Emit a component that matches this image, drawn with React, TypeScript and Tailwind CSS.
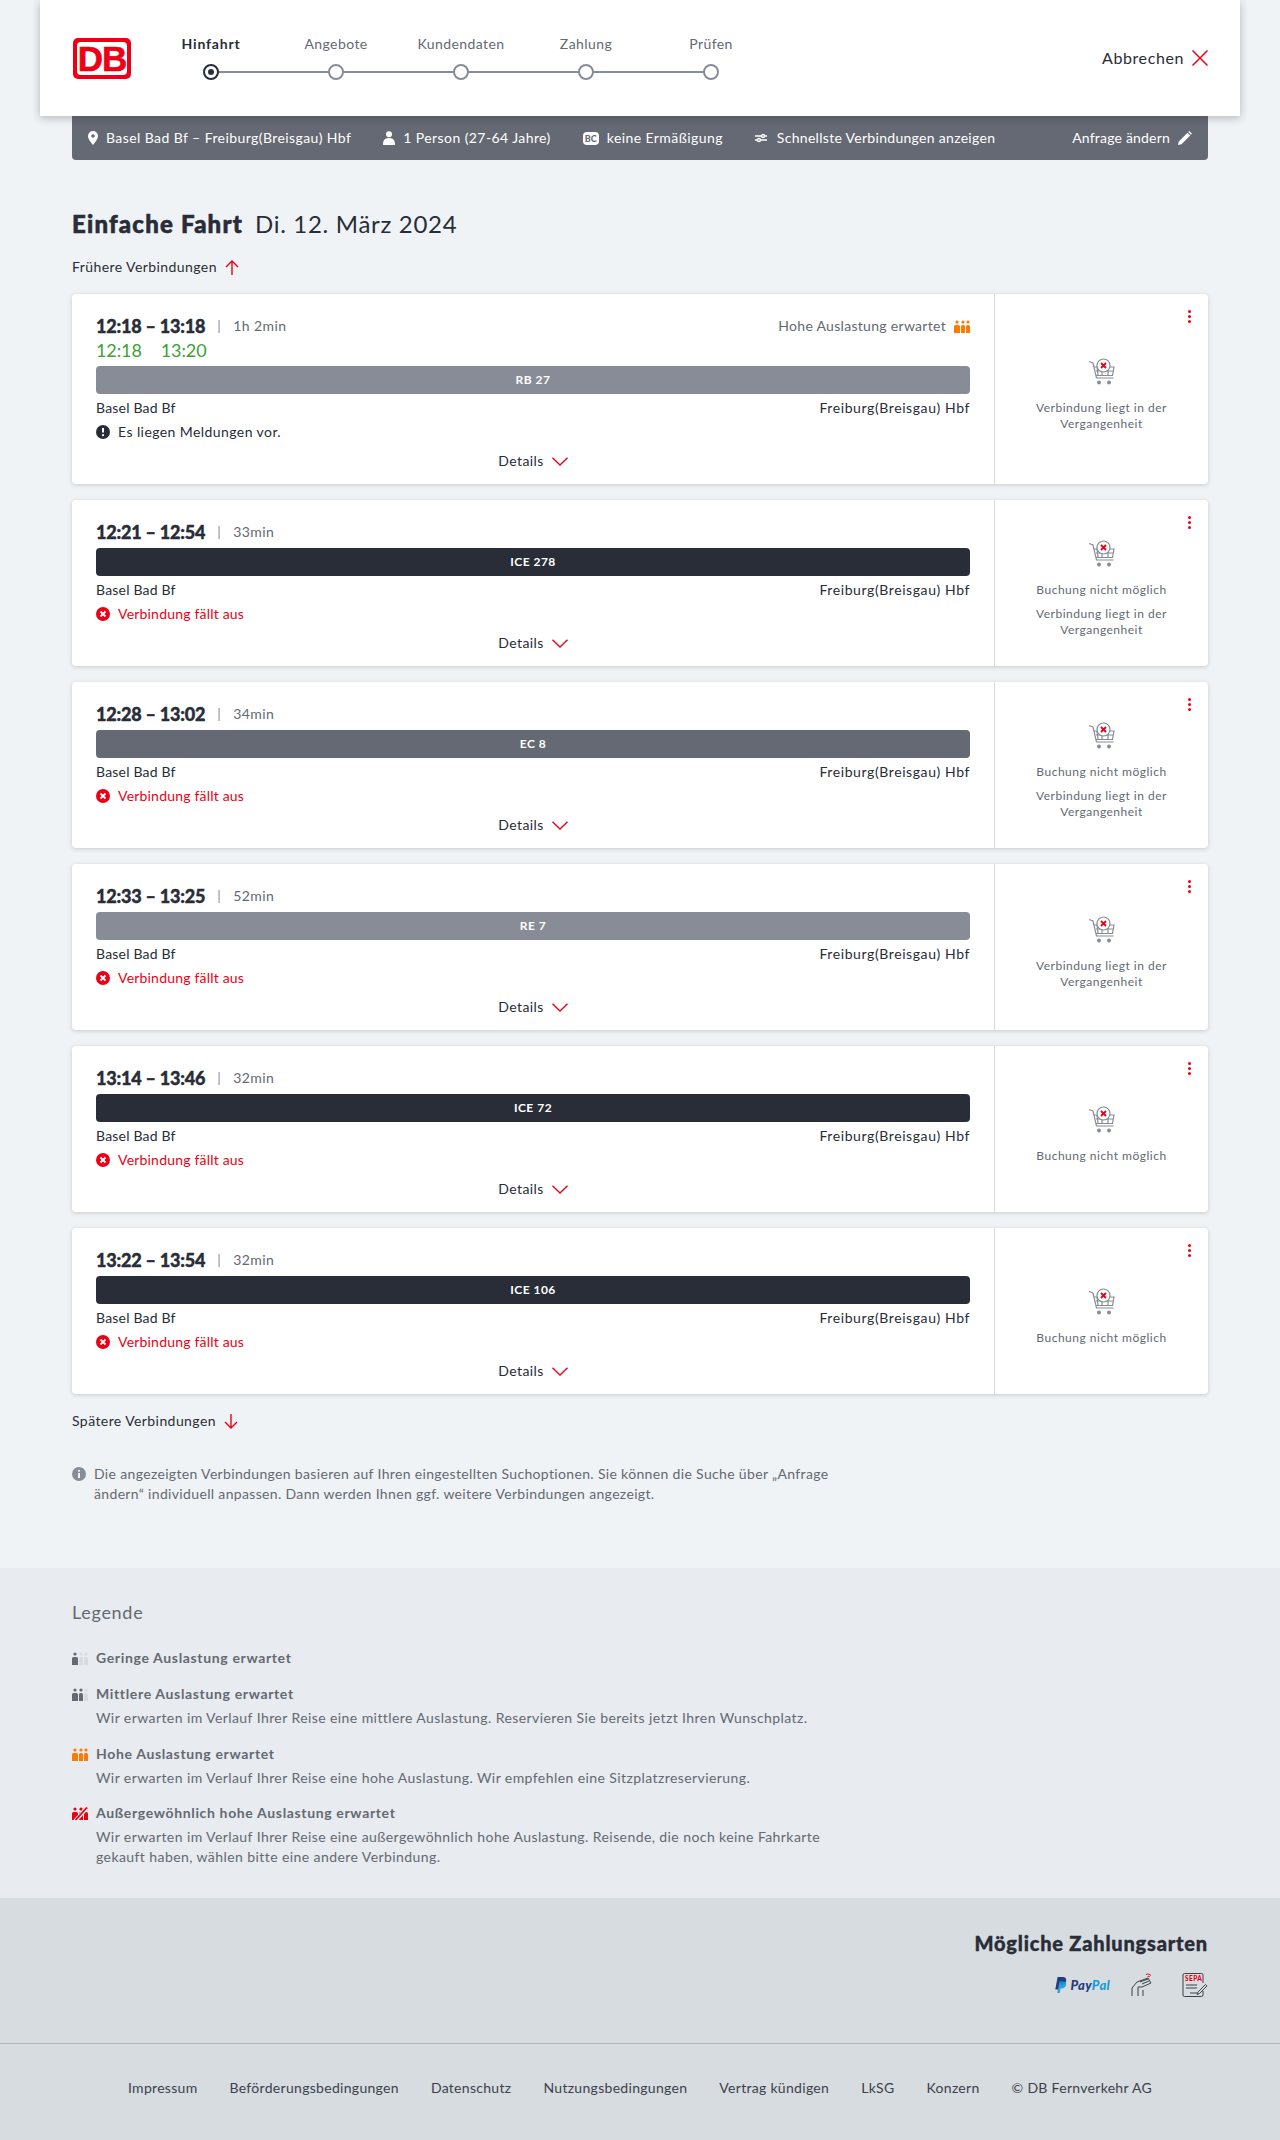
import React from 'react';

const trains = [
  { time: '12:18 – 13:18', dur: '1h 2min', delay: ['12:18', '13:20'], name: 'RB 27', bar: 'bg-[#878c96]', load: true, msg: 'info', right: ['Verbindung liegt in der Vergangenheit'] },
  { time: '12:21 – 12:54', dur: '33min', name: 'ICE 278', bar: 'bg-[#282d37]', msg: 'cancel', right: ['Buchung nicht möglich', 'Verbindung liegt in der Vergangenheit'] },
  { time: '12:28 – 13:02', dur: '34min', name: 'EC 8', bar: 'bg-[#646973]', msg: 'cancel', right: ['Buchung nicht möglich', 'Verbindung liegt in der Vergangenheit'] },
  { time: '12:33 – 13:25', dur: '52min', name: 'RE 7', bar: 'bg-[#878c96]', msg: 'cancel', right: ['Verbindung liegt in der Vergangenheit'] },
  { time: '13:14 – 13:46', dur: '32min', name: 'ICE 72', bar: 'bg-[#282d37]', msg: 'cancel', right: ['Buchung nicht möglich'] },
  { time: '13:22 – 13:54', dur: '32min', name: 'ICE 106', bar: 'bg-[#282d37]', msg: 'cancel', right: ['Buchung nicht möglich'] },
];

const steps = ['Hinfahrt', 'Angebote', 'Kundendaten', 'Zahlung', 'Prüfen'];

const footerLinks = ['Impressum', 'Beförderungsbedingungen', 'Datenschutz', 'Nutzungsbedingungen', 'Vertrag kündigen', 'LkSG', 'Konzern', '© DB Fernverkehr AG'];

const Load = ({ level, color, slash }: { level: number; color: string; slash?: boolean }) => (
  <svg width="16" height="13" viewBox="0 0 16 13" className="shrink-0">
    {[0, 1, 2].map(i => {
      const fill = i < level ? color : '#d7dce1';
      const x = i === 0 ? 0 : i === 1 ? 7 : 12;
      const w = i === 0 ? 6 : 4;
      return (
        <g key={i} fill={fill}>
          <circle cx={x + w / 2} cy="2" r="1.6" />
          <path d={`M${x} 13V6.5a1.5 1.5 0 0 1 1.5-1.5h${w - 3}a1.5 1.5 0 0 1 1.5 1.5V13z`} />
        </g>
      );
    })}
    {slash && (
      <>
        <path d="M3 14L15 1" stroke="#e8ebef" strokeWidth="4" />
        <path d="M3.500 13L15 .5" stroke={color} strokeWidth="1.800" />
      </>
    )}
  </svg>
);

const Cart = () => (
  <svg width="28" height="28" viewBox="0 0 28 28" fill="none" stroke="#878c96" strokeWidth="1.2">
    <path d="M1 3.500l4 1.500 3.500 15h17" />
    <path d="M6 9h20l-1.500 8.500H8" />
    <path d="M9 9l1 8M14 9v8M20 9v8M8 13h17" />
    <circle cx="15.500" cy="7.500" r="6.500" fill="#fff" />
    <path d="M13 5l5 5M18 5l-5 5" stroke="#ec0016" strokeWidth="1.800" />
    <circle cx="11" cy="24.500" r="2" fill="#878c96" stroke="none" />
    <circle cx="21" cy="24.500" r="2" fill="#878c96" stroke="none" />
  </svg>
);

const Chevron = () => (
  <svg width="16" height="9" viewBox="0 0 16 9" fill="none" stroke="#ec0016" strokeWidth="1.4">
    <path d="M.5.8L8 8l7.500-7.200" />
  </svg>
);

const Arrow = ({ up }: { up?: boolean }) => (
  <svg width="14" height="15" viewBox="0 0 14 15" fill="none" stroke="#ec0016" strokeWidth="1.4" className={up ? '' : 'rotate-180'}>
    <path d="M7 15V1M1 7l6-6 6 6" />
  </svg>
);

const Card = ({ t }: { t: (typeof trains)[number] }) => (
  <div className="flex bg-white rounded shadow-[0_1px_4px_rgba(40,45,55,0.2)]">
    <div className="w-[922px] px-6 pt-5 pb-[13px]">
      <div className={`flex items-center h-6 ${t.delay ? '' : 'mb-1'}`}>
        <span className="text-[18px] font-black text-[#282d37] tracking-[-0.2px] [-webkit-text-stroke:0.4px_#282d37]">{t.time}</span>
        <span className="ml-3 text-sm text-[#878c96]">|</span>
        <span className="ml-3 text-sm text-[#646973]">{t.dur}</span>
        {t.load && (
          <span className="ml-auto flex items-center gap-2 text-sm text-[#646973] tracking-[0.3px]">
            Hohe Auslastung erwartet
            <Load level={3} color="#ff7a00" />
          </span>
        )}
      </div>
      {t.delay && (
        <div className="flex gap-[19px] h-6 mb-1 text-[18px] leading-6 text-[#40a035] tracking-[-0.1px]">
          <span>{t.delay[0]}</span>
          <span>{t.delay[1]}</span>
        </div>
      )}
      <div className={`h-7 rounded flex items-center justify-center text-white text-xs font-bold tracking-[0.5px] ${t.bar}`}>{t.name}</div>
      <div className="flex justify-between mt-1 h-5 text-sm leading-5 text-[#282d37]">
        <span className="tracking-[0.2px]">Basel Bad Bf</span>
        <span className="tracking-[0.6px]">Freiburg(Breisgau) Hbf</span>
      </div>
      {t.msg === 'info' ? (
        <div className="flex items-center gap-2 mt-1 h-5 text-sm text-[#282d37]">
          <svg width="14" height="14" viewBox="0 0 14 14">
            <circle cx="7" cy="7" r="7" fill="#282d37" />
            <path d="M7 3v4.500" stroke="#fff" strokeWidth="2" />
            <circle cx="7" cy="10.200" r="1.100" fill="#fff" />
          </svg>
          Es liegen Meldungen vor.
        </div>
      ) : (
        <div className="flex items-center gap-2 mt-1 h-5 text-sm text-[#ec0016] tracking-[0.2px]">
          <svg width="14" height="14" viewBox="0 0 14 14">
            <circle cx="7" cy="7" r="7" fill="#ec0016" />
            <path d="M4.500 4.500l5 5M9.500 4.500l-5 5" stroke="#fff" strokeWidth="1.800" />
          </svg>
          Verbindung fällt aus
        </div>
      )}
      <div className="flex items-center justify-center gap-2 mt-[9px] h-5 text-sm text-[#282d37]">
        Details
        <Chevron />
      </div>
    </div>
    <div className="relative flex-1 border-l border-[#d7dce1] flex flex-col items-center justify-center pt-3 px-6">
      <div className="absolute right-[17px] top-4 flex flex-col gap-[2px]">
        <span className="w-[3px] h-[3px] rounded-full bg-[#ec0016]" />
        <span className="w-[3px] h-[3px] rounded-full bg-[#ec0016]" />
        <span className="w-[3px] h-[3px] rounded-full bg-[#ec0016]" />
      </div>
      <Cart />
      <div className="mt-[14px] flex flex-col gap-2 text-xs leading-4 text-[#646973] text-center tracking-[0.5px]">
        {t.right.map(r => <p key={r}>{r}</p>)}
      </div>
    </div>
  </div>
);

const LegendItem = ({ icon, title, children, last }: { icon: React.ReactNode; title: string; children?: React.ReactNode; last?: boolean }) => (
  <div className={last ? 'mt-[15px]' : 'mt-4 first:mt-0'}>
    <div className="flex items-center gap-2 h-5 text-sm font-bold text-[#646973] tracking-[0.65px]">
      {icon}
      {title}
    </div>
    {children && <p className="mt-1 ml-6 w-[760px] text-sm leading-5 text-[#646973]">{children}</p>}
  </div>
);

export default function App() {
  return (
    <div className="min-h-[2140px] bg-[#f0f3f5] font-['Lato','Noto_Sans',sans-serif] text-[#282d37] tracking-[0.42px]">
      <header className="relative z-10 mx-10 h-[116px] bg-white shadow-[0_2px_8px_rgba(40,45,55,0.3)] flex pl-[33px] pr-8">
        <div className="mt-[38px] w-[58px] h-[41px] rounded-[5px] bg-[#ec0016] p-1">
          <div className="h-full rounded-sm bg-white flex items-center justify-center text-[#ec0016] text-[35px] leading-none font-bold font-['Liberation_Sans',sans-serif] tracking-[-1px] [-webkit-text-stroke:0.6px_#ec0016]">DB</div>
        </div>
        <div className="flex ml-[17.5px] mt-[34px]">
          {steps.map((s, i) => (
            <div key={s} className="relative w-[125px] flex flex-col items-center">
              <span className={`h-5 text-sm leading-5 ${i === 0 ? 'font-bold text-[#282d37] tracking-[0.8px]' : 'text-[#646973]'}`}>{s}</span>
              <span className={`relative z-10 mt-[10px] w-4 h-4 rounded-full border-2 bg-white flex items-center justify-center ${i === 0 ? 'border-[#282d37]' : 'border-[#878c96]'}`}>
                {i === 0 && <span className="w-1.5 h-1.5 rounded-full bg-[#282d37]" />}
              </span>
              {i < 4 && <span className="absolute left-1/2 top-[37px] w-[125px] h-0.5 bg-[#878c96]" />}
            </div>
          ))}
        </div>
        <div className="ml-auto flex items-center gap-2 text-base tracking-[0.6px]">
          Abbrechen
          <svg width="16" height="16" viewBox="0 0 16 16" stroke="#ec0016" strokeWidth="1.5">
            <path d="M.5.5l15 15M15.500.5l-15 15" />
          </svg>
        </div>
      </header>

      <main className="mx-[72px]">
        <div className="h-11 rounded-b bg-[#646973] flex items-center pl-4 pr-4 text-sm text-white">
          <svg width="10" height="14" viewBox="0 0 10 14" fill="#fff"><path fillRule="evenodd" d="M5 0a5 5 0 0 1 5 5c0 3-3 6.500-5 9-2-2.500-5-6-5-9a5 5 0 0 1 5-5zm0 3.200a1.800 1.800 0 1 0 0 3.600 1.800 1.800 0 0 0 0-3.600z" /></svg>
          <span className="ml-2">Basel Bad Bf – Freiburg(Breisgau) Hbf</span>
          <svg className="ml-8" width="12" height="14" viewBox="0 0 12 14" fill="#fff"><circle cx="6" cy="3.200" r="3" /><path d="M0 14c0-4 1-7 6-7s6 3 6 7z" /></svg>
          <span className="ml-2">1 Person (27-64 Jahre)</span>
          <span className="ml-8 w-4 h-[13px] rounded-sm bg-white text-[#646973] text-[9px] leading-[13px] font-black text-center tracking-normal">BC</span>
          <span className="ml-2">keine Ermäßigung</span>
          <svg className="ml-8" width="12" height="10" viewBox="0 0 12 10" stroke="#fff" strokeWidth="1.4" fill="none"><path d="M0 3h12M0 7h12" /><circle cx="8" cy="3" r="1.500" fill="#646973" /><circle cx="4" cy="7" r="1.500" fill="#646973" /></svg>
          <span className="ml-[10px] tracking-[0.3px]">Schnellste Verbindungen anzeigen</span>
          <span className="ml-auto flex items-center gap-2 tracking-[0.2px]">
            Anfrage ändern
            <svg width="14" height="14" viewBox="0 0 14 14" fill="#fff"><path d="M0 14l.8-3.500L9.500 1.800l2.700 2.700-8.700 8.700zM10.300 1l1-1 2.700 2.700-1 1z" /></svg>
          </span>
        </div>

        <h1 className="mt-[50px] h-7 flex items-center gap-3 text-2xl">
          <span className="font-black tracking-[1.2px] [-webkit-text-stroke:0.6px_#282d37]">Einfache Fahrt</span>
          <span className="tracking-[0.7px]">Di. 12. März 2024</span>
        </h1>
        <div className="mt-[19px] flex items-center gap-2 h-5 text-sm"><span>Frühere Verbindungen</span><Arrow up /></div>

        <div className="mt-[17px] flex flex-col gap-4">
          {trains.map(t => <Card key={t.name} t={t} />)}
        </div>

        <div className="mt-[17px] flex items-center gap-2 h-5 text-sm"><span>Spätere Verbindungen</span><Arrow /></div>

        <div className="mt-[33px] pb-[64px] flex gap-2 w-[778px] text-sm leading-5 text-[#646973] tracking-[0.34px]">
          <svg className="mt-[3px] shrink-0" width="14" height="14" viewBox="0 0 14 14">
            <circle cx="7" cy="7" r="7" fill="#878c96" />
            <circle cx="7" cy="3.800" r="1.100" fill="#f0f3f5" />
            <path d="M7 6v5" stroke="#f0f3f5" strokeWidth="2" />
          </svg>
          <p>Die angezeigten Verbindungen basieren auf Ihren eingestellten Suchoptionen. Sie können die Suche über „Anfrage ändern“ individuell anpassen. Dann werden Ihnen ggf. weitere Verbindungen angezeigt.</p>
        </div>
      </main>

      <section className="bg-[#e8ebef] h-[330px] px-[72px] pt-8">
        <h2 className="h-6 text-lg leading-6 text-[#646973] tracking-[0.7px]">Legende</h2>
        <div className="mt-6">
          <LegendItem icon={<Load level={1} color="#646973" />} title="Geringe Auslastung erwartet" />
          <LegendItem icon={<Load level={2} color="#646973" />} title="Mittlere Auslastung erwartet">
            Wir erwarten im Verlauf Ihrer Reise eine mittlere Auslastung. Reservieren Sie bereits jetzt Ihren Wunschplatz.
          </LegendItem>
          <LegendItem icon={<Load level={3} color="#ff7a00" />} title="Hohe Auslastung erwartet">
            Wir erwarten im Verlauf Ihrer Reise eine hohe Auslastung. Wir empfehlen eine Sitzplatzreservierung.
          </LegendItem>
          <LegendItem last icon={<Load level={3} color="#ec0016" slash />} title="Außergewöhnlich hohe Auslastung erwartet">
            Wir erwarten im Verlauf Ihrer Reise eine außergewöhnlich hohe Auslastung. Reisende, die noch keine Fahrkarte gekauft haben, wählen bitte eine andere Verbindung.
          </LegendItem>
        </div>
      </section>

      <footer className="bg-[#d7dce1] h-[242px]">
        <div className="h-[146px] border-b border-[#afb4bb] px-[72px] pt-[31px] flex flex-col items-end">
          <h2 className="h-7 text-xl leading-7 font-black tracking-[0.8px] [-webkit-text-stroke:0.4px_#282d37]">Mögliche Zahlungsarten</h2>
          <div className="mt-4 flex items-center h-6">
            <svg width="12" height="16" viewBox="0 0 10 14"><path d="M2 0h4.500C9 0 10 1.500 9.500 3.500 9 6 7.500 7 5 7H3.500L2.800 11H0z" fill="#253b80" /><path d="M3.500 4h3.500c2 0 3 1 2.500 3-.5 2-2 3-4 3H4.500L4 14H1.800z" fill="#179bd7" opacity="0.9" /></svg>
            <span className="ml-[4px] text-[13px] leading-none font-black italic tracking-[0.3px]">
              <span className="text-[#253b80]">Pay</span><span className="text-[#179bd7]">Pal</span>
            </span>
            <svg className="ml-[21px]" width="22" height="24" viewBox="0 0 22 24" fill="none" stroke="#3c414b" strokeWidth="1">
              <path d="M1 23v-8l5-6 11-4 3 5-9 4H7v9M12 23v-6" />
              <path d="M9 9l8-3M11 11l7-3" />
              <path d="M15 1.500c2-.8 3.500-.5 5 1M16.500 3.500c1-.3 1.800-.2 2.500.5" stroke="#ec0016" />
            </svg>
            <svg className="ml-[29px]" width="26" height="24" viewBox="0 0 26 24" fill="none" stroke="#3c414b" strokeWidth="1">
              <path d="M21 10V2a1.500 1.500 0 0 0-1.500-1.500h-17A1.500 1.500 0 0 0 1 2v20a1.500 1.500 0 0 0 1.500 1.500h17A1.500 1.500 0 0 0 21 22v-4" />
              <text x="3" y="8" fontSize="6.500" fontWeight="900" fill="#ec0016" stroke="none" fontFamily="Lato">SEPA</text>
              <path d="M4 12h11M4 15h11M8 20h7" />
              <path d="M16 19l-1 2.500 2.500-1L25 13l-1.500-1.500z" />
            </svg>
          </div>
        </div>
        <nav className="mt-[34px] flex justify-center gap-8 h-5 text-sm leading-5 text-[#3c414b] tracking-[0.3px]">
          {footerLinks.map(l => <span key={l}>{l}</span>)}
        </nav>
      </footer>
    </div>
  );
}
